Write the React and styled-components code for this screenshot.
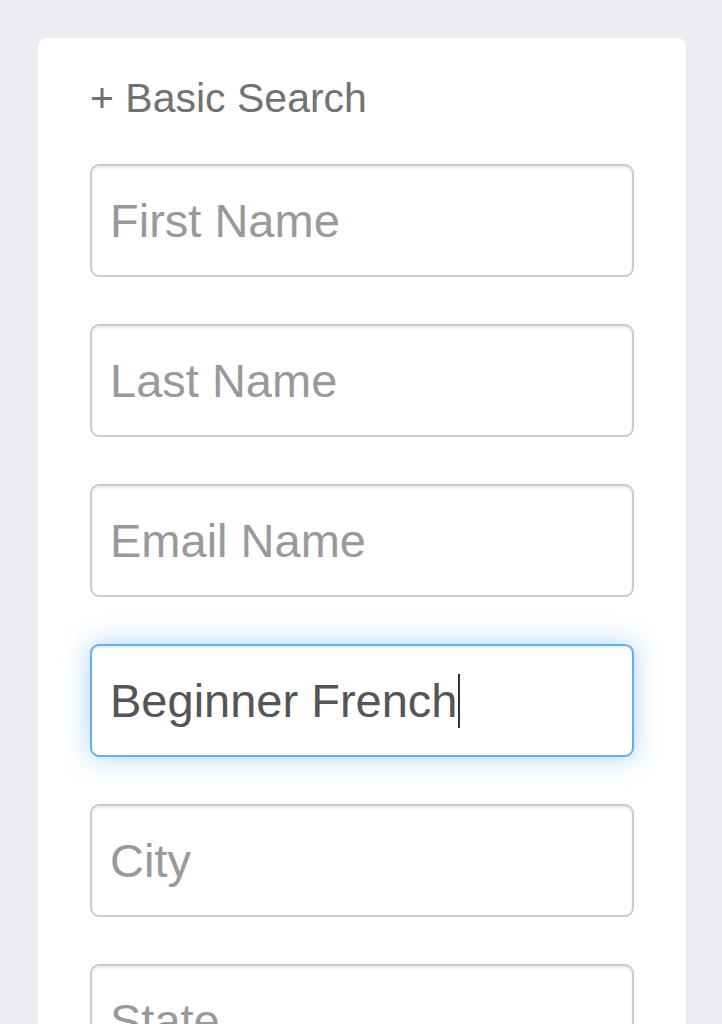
import React from "react";
import styled, { createGlobalStyle } from "styled-components";

const Global = createGlobalStyle`
  html, body { margin: 0; padding: 0; }
  body {
    background: #ebedf1;
    font-family: "Liberation Sans", Arial, Helvetica, sans-serif;
    overflow: hidden;
  }
`;

const Page = styled.div`
  padding: 38px 36px 0 38px;
  height: 1024px;
  box-sizing: border-box;
  overflow: hidden;
`;

const Card = styled.div`
  width: 648px;
  min-height: 1100px;
  background: #ffffff;
  border-radius: 8px;
  box-shadow: 0 0 1px rgba(0, 0, 0, 0.06);
  padding: 36px 52px 0 52px;
  box-sizing: border-box;
  display: flex;
  flex-direction: column;
`;

const Title = styled.div`
  font-size: 41px;
  line-height: 48px;
  color: #727272;
  margin-bottom: 42px;
`;

const Fields = styled.div`
  display: flex;
  flex-direction: column;
  gap: 47px;
`;

const Field = styled.div`
  height: 113px;
  box-sizing: border-box;
  border: 2px solid ${(p) => (p.$focused ? "#66afe9" : "#cccccc")};
  border-radius: 9px;
  background: #ffffff;
  padding: 0 18px;
  display: flex;
  align-items: center;
  font-size: 47px;
  box-shadow: ${(p) =>
    p.$focused
      ? "inset 0 2px 2px rgba(0,0,0,0.075), 0 0 26px rgba(102,175,233,0.55)"
      : "inset 0 2px 3px rgba(0,0,0,0.09)"};
`;

const Text = styled.span`
  color: ${(p) => (p.$placeholder ? "#999999" : "#555555")};
  white-space: nowrap;
`;

const Caret = styled.span`
  display: inline-block;
  width: 2px;
  height: 54px;
  background: #333333;
  margin-left: 1px;
`;

const fields = [
  { placeholder: "First Name" },
  { placeholder: "Last Name" },
  { placeholder: "Email Name" },
  { value: "Beginner French", focused: true },
  { placeholder: "City" },
  { placeholder: "State" },
];

export default function App() {
  return (
    <>
      <Global />
      <Page>
        <Card>
          <Title>+ Basic Search</Title>
          <Fields>
            {fields.map((f, i) => (
              <Field key={i} $focused={f.focused}>
                {f.value ? (
                  <>
                    <Text>{f.value}</Text>
                    <Caret />
                  </>
                ) : (
                  <Text $placeholder>{f.placeholder}</Text>
                )}
              </Field>
            ))}
          </Fields>
        </Card>
      </Page>
    </>
  );
}
